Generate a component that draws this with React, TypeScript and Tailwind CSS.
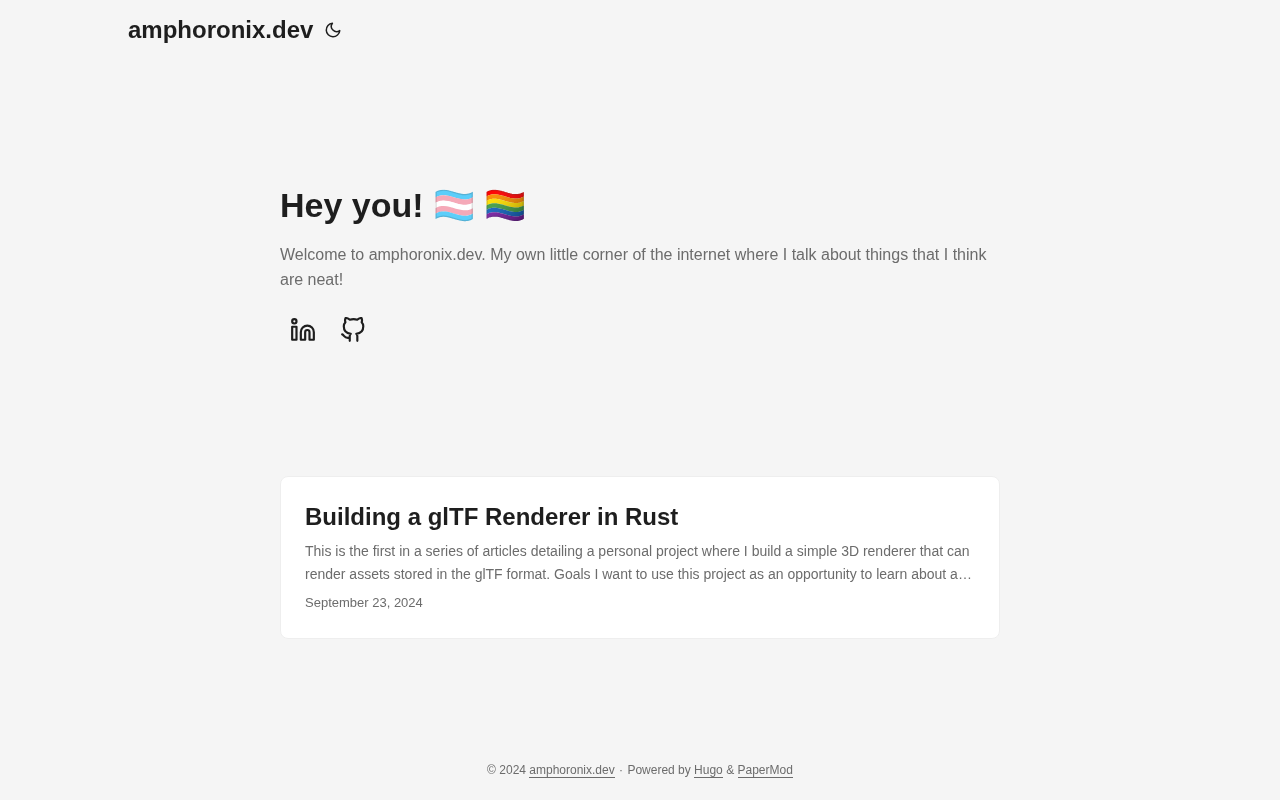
import React from "react";

const sans = "font-['Liberation_Sans',sans-serif]";

function Icon({ size, children }: { size: string; children: React.ReactNode }) {
  return (
    <svg
      className={size}
      viewBox="0 0 24 24"
      fill="none"
      stroke="currentColor"
      strokeWidth="2"
      strokeLinecap="round"
      strokeLinejoin="round"
    >
      {children}
    </svg>
  );
}

export default function App() {
  return (
    <div className={`${sans} min-h-screen bg-[#f5f5f5] text-[#1e1e1e]`}>
      <div className="will-change-transform">
        <header className="h-[60px]">
          <nav className="mx-auto flex h-[60px] max-w-[1024px] items-center">
            <a className="text-2xl font-bold" href="#">
              amphoronix.dev
            </a>
            <button className="ml-[11px] flex h-[18px] w-[18px] items-center justify-center" aria-label="Toggle theme">
              <Icon size="h-[18px] w-[18px]">
                <path d="M21 12.79A9 9 0 1 1 11.21 3 7 7 0 0 0 21 12.79z" />
              </Icon>
            </button>
          </nav>
        </header>

        <main className="mx-auto min-h-[680px] max-w-[768px] p-6">
          <section className="mt-6 mb-12 flex min-h-[320px] flex-col justify-center">
            <h1 className="mb-4 text-[34px] leading-[1.2] font-bold">Hey you! 🏳️‍⚧️ 🏳️‍🌈</h1>
            <p className="mb-[14px] text-base leading-[25.6px] text-[#6c6c6c]">
              Welcome to amphoronix.dev. My own little corner of the internet where I talk about things that I think are
              neat!
            </p>
            <div className="flex gap-1">
              <a className="flex px-[10px] pt-[10px] pb-2" href="#" aria-label="LinkedIn">
                <Icon size="h-[26px] w-[26px]">
                  <path d="M16 8a6 6 0 0 1 6 6v7h-4v-7a2 2 0 0 0-2-2 2 2 0 0 0-2 2v7h-4v-7a6 6 0 0 1 6-6z" />
                  <rect x="2" y="9" width="4" height="12" />
                  <circle cx="4" cy="4" r="2" />
                </Icon>
              </a>
              <a className="flex px-[10px] pt-[10px] pb-2" href="#" aria-label="GitHub">
                <Icon size="h-[26px] w-[26px]">
                  <path d="M9 19c-5 1.5-5-2.5-7-3m14 6v-3.87a3.37 3.37 0 0 0-.94-2.61c3.14-.35 6.44-1.54 6.44-7A5.44 5.44 0 0 0 20 4.77 5.07 5.07 0 0 0 19.91 1S18.73.65 16 2.48a13.38 13.38 0 0 0-7 0C6.27.65 5.09 1 5.09 1A5.07 5.07 0 0 0 5 4.77a5.44 5.44 0 0 0-1.5 3.75c0 5.42 3.3 6.61 6.44 7A3.37 3.37 0 0 0 9 18.13V22" />
                </Icon>
              </a>
            </div>
          </section>

          <article className="rounded-lg border border-[#eeeeee] bg-white p-6">
            <h2 className="text-2xl leading-[1.3] font-bold">Building a glTF Renderer in Rust</h2>
            <p className="my-2 line-clamp-2 text-sm leading-[22.4px] text-[#6c6c6c]">
              This is the first in a series of articles detailing a personal project where I build a simple 3D renderer
              that can render assets stored in the glTF format. Goals I want to use this project as an opportunity to
              learn about a variety of things related to computer graphics and the Rust language.
            </p>
            <div className="text-[13px] leading-[20.8px] text-[#6c6c6c]">September 23, 2024</div>
          </article>
        </main>

        <footer className="mx-auto flex h-[60px] max-w-[1024px] items-start justify-center px-6 pt-[21px] text-xs leading-[19.2px] text-[#6c6c6c]">
          <span>
            © 2024{" "}
            <a className="border-b border-[#6c6c6c]" href="#">
              amphoronix.dev
            </a>
            <span className="mx-[1px]"> · </span>
            <span>
              Powered by{" "}
              <a className="border-b border-[#6c6c6c]" href="#">
                Hugo
              </a>{" "}
              &{" "}
              <a className="border-b border-[#6c6c6c]" href="#">
                PaperMod
              </a>
            </span>
          </span>
        </footer>
      </div>
    </div>
  );
}
